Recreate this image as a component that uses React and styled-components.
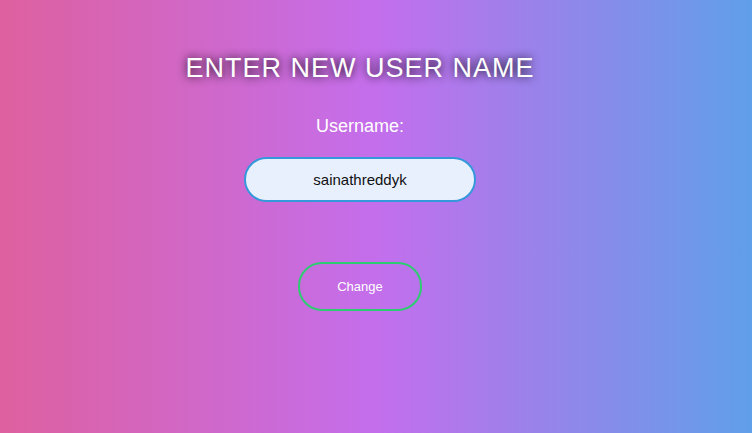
import React, { useState } from "react";
import styled, { createGlobalStyle } from "styled-components";

const GlobalStyle = createGlobalStyle`
  * { box-sizing: border-box; }
  body {
    margin: 0;
    font-family: "Liberation Sans", Arial, sans-serif;
    color: #fff;
  }
`;

const Page = styled.main`
  min-height: 100vh;
  padding: 51px 32px 0 0;
  background: linear-gradient(to right, #de609f 0%, #c46eec 50%, #609fea 100%);
`;

const Form = styled.form`
  display: flex;
  flex-direction: column;
  align-items: center;
`;

const Title = styled.h1`
  margin: 0;
  font-size: 27px;
  line-height: 34px;
  font-weight: 400;
  letter-spacing: 1px;
  text-transform: uppercase;
  text-shadow: 0 0 10px #000;
`;

const Label = styled.label`
  margin-top: 31px;
  font-size: 18px;
  line-height: 20px;
`;

const TextBox = styled.input`
  width: 232px;
  height: 45px;
  margin-top: 21px;
  padding: 0 40px;
  border: 2px solid #3498db;
  border-radius: 24px;
  outline: none;
  background: #e8f0fe;
  color: #111;
  font: 15px "Liberation Sans", Arial, sans-serif;
  text-align: center;
`;

const SubmitButton = styled.button`
  margin-top: 60px;
  padding: 14px 37px;
  border: 2px solid #2ecc71;
  border-radius: 24px;
  background: none;
  color: #fff;
  font: 13px/17px "Liberation Sans", Arial, sans-serif;
  cursor: pointer;
`;

export default function App() {
  const [name, setName] = useState("sainathreddyk");
  return (
    <Page>
      <GlobalStyle />
      <Form onSubmit={(event) => event.preventDefault()}>
        <Title>Enter new user name</Title>
        <Label htmlFor="username">Username:</Label>
        <TextBox
          id="username"
          type="text"
          value={name}
          onChange={(event) => setName(event.target.value)}
        />
        <SubmitButton type="submit">Change</SubmitButton>
      </Form>
    </Page>
  );
}
